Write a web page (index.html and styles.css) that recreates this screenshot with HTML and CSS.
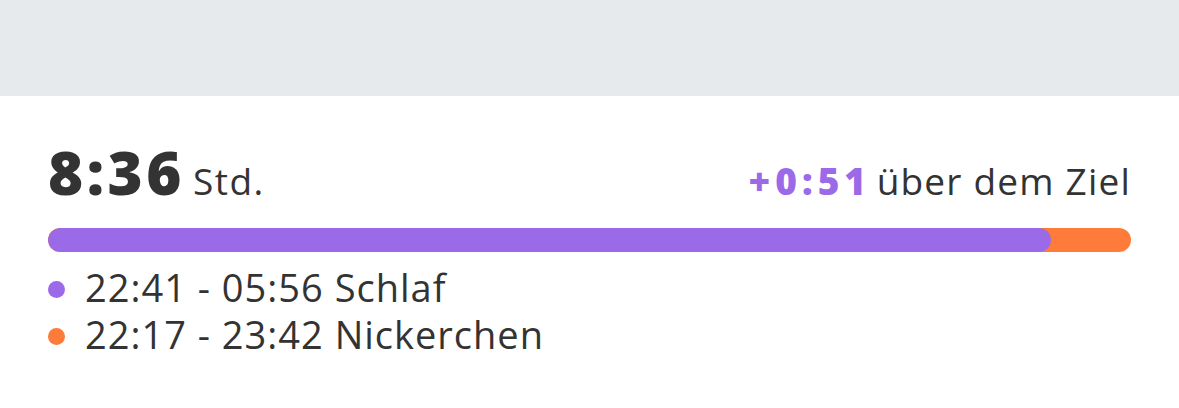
FILE: index.html
```html
<!DOCTYPE html>
<html>
<head>
  <meta charset="UTF-8">
  <title>Schlaf</title>
  <link rel="stylesheet" href="styles.css">
</head>
<body>
  <div class="top-band"></div>

  <div class="sleep-card">
    <div class="summary">
      <div class="total">
        <span class="hours">8:36</span>
        <span class="unit">Std.</span>
      </div>
      <div class="goal">
        <span class="goal-diff">+0:51</span>
        <span class="goal-text">über dem Ziel</span>
      </div>
    </div>

    <div class="bar">
      <div class="bar-sleep" style="width: 92.6%;"></div>
    </div>

    <ul class="legend">
      <li><span class="dot dot-sleep"></span>22:41 - 05:56 Schlaf</li>
      <li><span class="dot dot-nap"></span>22:17 - 23:42 Nickerchen</li>
    </ul>
  </div>
</body>
</html>
```

FILE: styles.css
```css
body {
  margin: 0;
  padding: 0;
  background: #ffffff;
  font-family: "Open Sans", Lato, sans-serif;
  color: #333333;
}
.top-band {
  height: 96px;
  background-color: #e6eaed;
}
.sleep-card {
  padding: 35px 48px 0 48px;
}
.summary {
  display: flex;
  justify-content: space-between;
  align-items: baseline;
  height: 60px;
}
.hours {
  font-size: 60px;
  font-weight: 800;
  letter-spacing: 3.5px;
}
.unit {
  font-size: 37px;
  margin-left: 4px;
  letter-spacing: 1.5px;
}
.goal {
  font-size: 37px;
}
.goal-diff {
  color: #9b6ae8;
  font-weight: 800;
  letter-spacing: 5px;
}
.goal-text {
  margin-left: -4px;
  letter-spacing: 1.2px;
}
.bar {
  margin-top: 37px;
  height: 24px;
  border-radius: 12px;
  background-color: #ff7b3a;
  overflow: hidden;
}
.bar-sleep {
  height: 100%;
  border-radius: 12px;
  background-color: #9b6ae8;
}
.legend {
  list-style: none;
  margin: 12px 0 0 0;
  padding: 0;
  font-size: 38px;
  line-height: 47px;
  letter-spacing: 1px;
}
.legend li {
  display: flex;
  align-items: center;
}
.dot {
  width: 17px;
  height: 17px;
  border-radius: 50%;
  margin-top: 4px;
  margin-right: 20px;
}
.dot-sleep {
  background-color: #9b6ae8;
}
.dot-nap {
  background-color: #ff7b3a;
}
```
